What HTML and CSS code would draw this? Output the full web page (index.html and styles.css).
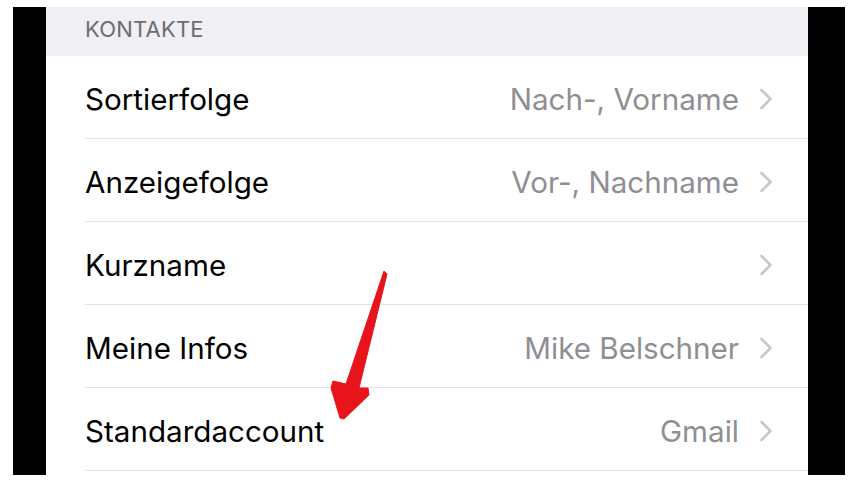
FILE: index.html
```html
<!DOCTYPE html>
<html lang="de">
<head>
  <meta charset="UTF-8">
  <meta name="viewport" content="width=device-width, initial-scale=1.0">
  <title>Kontakte</title>
  <link rel="stylesheet" href="styles.css">
</head>
<body>
  <div class="frame">
    <div class="screen">
      <div class="section-header">KONTAKTE</div>

      <div class="row">
        <span class="label">Sortierfolge</span>
        <span class="value">Nach-, Vorname</span>
        <svg class="chevron" width="14" height="22" viewBox="0 0 14 22"><polyline points="2.5,2 11.5,11 2.5,20" /></svg>
      </div>
      <div class="row">
        <span class="label">Anzeigefolge</span>
        <span class="value">Vor-, Nachname</span>
        <svg class="chevron" width="14" height="22" viewBox="0 0 14 22"><polyline points="2.5,2 11.5,11 2.5,20" /></svg>
      </div>
      <div class="row">
        <span class="label">Kurzname</span>
        <span class="value"></span>
        <svg class="chevron" width="14" height="22" viewBox="0 0 14 22"><polyline points="2.5,2 11.5,11 2.5,20" /></svg>
      </div>
      <div class="row">
        <span class="label">Meine Infos</span>
        <span class="value">Mike Belschner</span>
        <svg class="chevron" width="14" height="22" viewBox="0 0 14 22"><polyline points="2.5,2 11.5,11 2.5,20" /></svg>
      </div>
      <div class="row">
        <span class="label">Standardaccount</span>
        <span class="value">Gmail</span>
        <svg class="chevron" width="14" height="22" viewBox="0 0 14 22"><polyline points="2.5,2 11.5,11 2.5,20" /></svg>
      </div>
    </div>
  </div>

  <!-- red annotation arrow -->
  <svg class="arrow" width="858" height="483" viewBox="0 0 858 483">
    <polygon points="384,271 387,274 359,388 368,388 369,395 344,419 340,418 331,388 333,381 346,384" />
  </svg>
</body>
</html>
```

FILE: styles.css
```css
body {
  margin: 0;
  background-color: #fff;
  font-family: Inter, "Liberation Sans", Arial, sans-serif;
}

.frame {
  margin: 7px 13px 8px 13px;
  height: 468px;
  background-color: #000;
  padding: 0 37px 0 33px;
}

.screen {
  background-color: #fff;
  height: 100%;
  overflow: hidden;
}

.section-header {
  height: 49px;
  background-color: #efeff4;
  color: #6d6d72;
  font-size: 22px;
  padding-left: 39px;
  display: flex;
  align-items: center;
  padding-bottom: 6px;
  box-sizing: border-box;
  letter-spacing: 0.2px;
}

.row {
  height: 79px;
  margin-left: 39px;
  padding-right: 35px;
  padding-top: 3px;
  border-bottom: 1px solid #e3e3e6;
  display: flex;
  align-items: center;
  font-size: 29.6px;
}

.label {
  color: #000;
  flex: 1;
}

.value {
  color: #8e8e93;
  margin-right: 20px;
}

.chevron {
  fill: none;
  stroke: #c7c7cc;
  stroke-width: 2.6;
  stroke-linecap: round;
  stroke-linejoin: round;
}

.arrow {
  position: absolute;
  left: 0;
  top: 0;
  fill: #e8141b;
  stroke: #e8141b;
  stroke-width: 1;
  stroke-linejoin: round;
}
```
